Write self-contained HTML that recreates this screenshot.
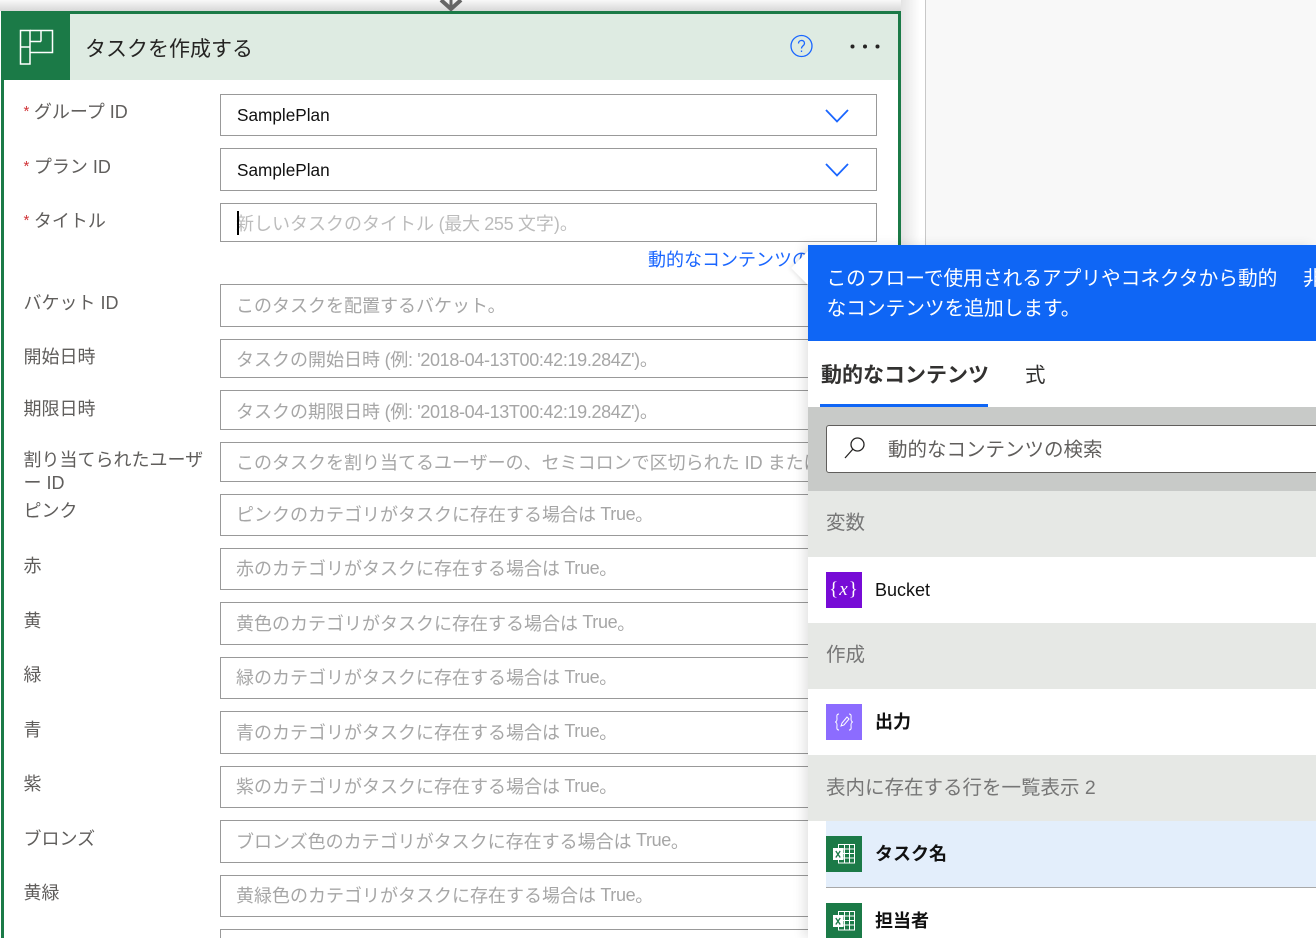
<!DOCTYPE html>
<html lang="ja"><head><meta charset="utf-8"><title>タスクを作成する</title>
<style>
*{box-sizing:border-box}
html,body{margin:0;padding:0;width:1316px;height:938px;overflow:hidden;background:#fff;font-family:"Liberation Sans","Noto Sans CJK JP",sans-serif}
#w{position:absolute;left:0;top:0;width:1316px;height:938px;overflow:hidden;background:#fff}
.a{position:absolute;white-space:nowrap}
.l{position:absolute;left:23.500px;font-size:18px;line-height:24px;color:#605e5c;white-space:nowrap}
.l i{color:#d13438;font-style:normal;font-size:15px;position:relative;top:-2px;margin-right:4.500px}
.f{position:absolute;left:220px;width:657px;border:1px solid #999;background:#fff;font-size:18px;color:#a6a6a6;padding-left:15px;white-space:nowrap;overflow:hidden;display:flex;align-items:center}
.u{padding-bottom:2px}
.f span{letter-spacing:-.35px;white-space:pre}
.sec{position:absolute;left:808px;width:508px;height:66px;background:#e6e8e5;color:#767676;font-size:19.500px;line-height:66px;padding-left:18px;white-space:nowrap}
.ic{position:absolute;left:826px;width:36px;height:36px}
.it{position:absolute;left:875px;font-size:18px;line-height:24px;color:#111;white-space:nowrap}
</style></head><body><div id="w">
<div class="a" style="left:0;top:0;width:925px;height:11px;background:linear-gradient(#f8f8f8,#d8d8d8)"></div>
<svg class="a" style="left:438px;top:0" width="26" height="11"><path d="M3 0L13 9L23 0" fill="none" stroke="#666" stroke-width="4"/><path d="M13 0V8" stroke="#666" stroke-width="3"/></svg>
<div class="a" style="left:901px;top:0;width:24px;height:938px;background:linear-gradient(90deg,#e4e4e4,#fff 80%)"></div>
<div class="a" style="left:925px;top:0;width:391px;height:938px;background:#f8f8f8;border-left:1px solid #c8c8c8"></div>

<div class="a" style="left:1px;top:11px;width:900px;height:940px;background:#fff;border:3px solid #1b7a47"></div>
<div class="a" style="left:4px;top:14px;width:894px;height:66px;background:#deebe2"></div>
<div class="a" style="left:4px;top:14px;width:66px;height:66px;background:#1b7a47"></div>
<svg class="a" style="left:19px;top:29px" width="36" height="37" fill="none" stroke="#fff" stroke-width="1.500"><path d="M1.500 1.500H11V35H1.500ZM1.500 18H11"/><path d="M11 1.500H33.500V23.500H11M22 1.500V12.500M11 12.500H22"/></svg>
<div class="a" style="left:85px;top:35px;font-size:21px;line-height:30px;color:#252423">タスクを作成する</div>
<svg class="a" style="left:789px;top:34px" width="24" height="24" fill="none" stroke="#1a66ff" stroke-width="1.300"><circle cx="12.500" cy="12" r="10.500"/><path d="M9.500 9.500c0-4 6-4 6-.3 0 2.600-3 2.500-3 5.300"/><path d="M12.500 16.500v1.500"/></svg>
<svg class="a" style="left:848px;top:42px" width="34" height="10" fill="#252423"><circle cx="4.500" cy="4.500" r="2"/><circle cx="17" cy="4.500" r="2"/><circle cx="29.500" cy="4.500" r="2"/></svg>

<div class="l" style="top:100px"><i>*</i>グループ ID</div>
<div class="l" style="top:155px"><i>*</i>プラン ID</div>
<div class="l" style="top:209px"><i>*</i>タイトル</div>
<div class="l" style="top:291px">バケット ID</div>
<div class="l" style="top:345px">開始日時</div>
<div class="l" style="top:397px">期限日時</div>
<div class="l" style="top:448px">割り当てられたユーザ</div>
<div class="l" style="top:471px">ー ID</div>
<div class="l" style="top:499px">ピンク</div>
<div class="l" style="top:554px">赤</div>
<div class="l" style="top:609px">黄</div>
<div class="l" style="top:663px">緑</div>
<div class="l" style="top:718px">青</div>
<div class="l" style="top:772px">紫</div>
<div class="l" style="top:827px">ブロンズ</div>
<div class="l" style="top:881px">黄緑</div>

<div class="f" style="top:94px;height:42px;color:#111;padding-left:16px;font-size:17.200px">SamplePlan</div>
<svg class="a" style="left:824px;top:108px" width="26" height="16" fill="none" stroke="#1a66ff" stroke-width="1.800"><path d="M2 2L13 13.500L24 2"/></svg>
<div class="f" style="top:148px;height:43px;color:#111;padding-left:16px;font-size:17.200px"><div style="position:relative;top:1px">SamplePlan</div></div>
<svg class="a" style="left:824px;top:162px" width="26" height="16" fill="none" stroke="#1a66ff" stroke-width="1.800"><path d="M2 2L13 13.500L24 2"/></svg>
<div class="f" style="top:203px;height:39px;color:#bcbcbc">新しいタスクのタイトル<span> (最大 255 </span>文字)。</div>
<div class="a" style="left:237px;top:211px;width:2px;height:24px;background:#000"></div>
<div class="a" style="left:648px;top:248px;width:160px;font-size:18px;line-height:24px;color:#1a66ff;overflow:hidden">動的なコンテンツの追加</div>
<div class="f u" style="top:284px;height:43px">このタスクを配置するバケット。</div>
<div class="f" style="top:339px;height:39px">タスクの開始日時<span> (例: '2018-04-13T00:42:19.284Z')</span>。</div>
<div class="f" style="top:390px;height:40px;padding-top:2px">タスクの期限日時<span> (例: '2018-04-13T00:42:19.284Z')</span>。</div>
<div class="f" style="top:442px;height:40px">このタスクを割り当てるユーザーの、セミコロンで区切られた ID またはメール。</div>
<div class="f u" style="top:494px;height:42px">ピンクのカテゴリがタスクに存在する場合は<span> True</span>。</div>
<div class="f u" style="top:548px;height:42px">赤のカテゴリがタスクに存在する場合は<span> True</span>。</div>
<div class="f u" style="top:602px;height:43px">黄色のカテゴリがタスクに存在する場合は<span> True</span>。</div>
<div class="f u" style="top:657px;height:42px">緑のカテゴリがタスクに存在する場合は<span> True</span>。</div>
<div class="f u" style="top:711px;height:43px">青のカテゴリがタスクに存在する場合は<span> True</span>。</div>
<div class="f u" style="top:766px;height:42px">紫のカテゴリがタスクに存在する場合は<span> True</span>。</div>
<div class="f u" style="top:820px;height:43px">ブロンズ色のカテゴリがタスクに存在する場合は<span> True</span>。</div>
<div class="f u" style="top:875px;height:42px">黄緑色のカテゴリがタスクに存在する場合は<span> True</span>。</div>
<div class="f" style="top:929px;height:30px"></div>

<!-- panel -->
<div class="a" style="left:808px;top:245px;width:508px;height:693px;background:#fff;box-shadow:-5px 0 10px rgba(0,0,0,.1)"></div>
<div class="a" style="left:786px;top:245px;width:22px;height:46px;overflow:hidden"><div style="position:absolute;left:10px;top:11px;width:24px;height:24px;background:#fff;transform:rotate(45deg);box-shadow:-1px 1px 5px rgba(0,0,0,.1)"></div></div>
<div class="a" style="left:808px;top:245px;width:508px;height:96px;background:#0f66f5;overflow:hidden">
<div class="a" style="left:18.500px;top:19px;font-size:19.700px;line-height:30px;color:#fff">このフローで使用されるアプリやコネクタから動的</div>
<div class="a" style="left:18.500px;top:49px;font-size:19.700px;line-height:30px;color:#fff">なコンテンツを追加します。</div>
<div class="a" style="left:495px;top:19px;font-size:19.700px;line-height:30px;color:#fff">非</div>
</div>
<div class="a" style="left:821px;top:362px;font-size:21px;line-height:28px;font-weight:700;color:#323130">動的なコンテンツ</div>
<div class="a" style="left:1025px;top:362px;font-size:20.500px;line-height:28px;color:#323130">式</div>
<div class="a" style="left:820px;top:404px;width:168px;height:3px;background:#0f66f5"></div>
<div class="a" style="left:808px;top:407px;width:508px;height:84px;background:#c8cac8"></div>
<div class="a" style="left:826px;top:425px;width:500px;height:48px;background:#fff;border:1px solid #605e5c;border-radius:3px"></div>
<svg class="a" style="left:843px;top:435px" width="26" height="26" fill="none" stroke="#252423" stroke-width="1.300"><circle cx="14.500" cy="9.500" r="6.500"/><path d="M10 14L2 23"/></svg>
<div class="a" style="left:888px;top:436px;font-size:19.500px;line-height:28px;color:#605e5c">動的なコンテンツの検索</div>

<div class="sec" style="top:491px;line-height:64px">変数</div>
<div class="ic" style="top:572px;background:#770bd6;color:#fff;font-family:'Liberation Serif',serif;font-size:19px;line-height:35px;text-align:center;letter-spacing:1px">{<em>x</em>}</div>
<div class="it" style="top:578px">Bucket</div>
<div class="sec" style="top:623px;line-height:64px">作成</div>
<div class="ic" style="top:704px;background:#8c6cff"><svg width="36" height="36" fill="none" stroke="#fff" stroke-width="1"><path d="M13 10c-3 0-2 3-2 5s-1 3-2 3c1 0 2 1 2 3s-1 5 2 5"/><path d="M23 10c3 0 2 3 2 5s1 3 2 3c-1 0-2 1-2 3s1 5-2 5"/><path d="M15 22l1-3 5-6 2 2-5 6z"/></svg></div>
<div class="it" style="top:710px;font-weight:700">出力</div>
<div class="sec" style="top:755px">表内に存在する行を一覧表示 2</div>
<div class="a" style="left:826px;top:821px;width:490px;height:67px;background:#e3eefb;border-bottom:1px solid #a8a8a8"></div>
<div class="ic" style="top:836px;background:#1b7a47"><svg width="36" height="36" fill="none" stroke="#fff" stroke-width="1"><path d="M12.500 8.500h16v18.500h-16zM18.500 8.500v18.500M23.500 8.500v18.500M12.500 13h16M12.500 17.500h16M12.500 22h16"/><rect x="7" y="12" width="10.500" height="12" fill="#fff" stroke="none"/><path d="M9.800 15l4.400 6.500M14.200 15l-4.400 6.500" stroke="#1b7a47" stroke-width="1.300"/></svg></div>
<div class="it" style="top:842px;font-weight:700">タスク名</div>
<div class="ic" style="top:903px;background:#1b7a47"><svg width="36" height="36" fill="none" stroke="#fff" stroke-width="1"><path d="M12.500 8.500h16v18.500h-16zM18.500 8.500v18.500M23.500 8.500v18.500M12.500 13h16M12.500 17.500h16M12.500 22h16"/><rect x="7" y="12" width="10.500" height="12" fill="#fff" stroke="none"/><path d="M9.800 15l4.400 6.500M14.200 15l-4.400 6.500" stroke="#1b7a47" stroke-width="1.300"/></svg></div>
<div class="it" style="top:909px;font-weight:700">担当者</div>
</div></body></html>
